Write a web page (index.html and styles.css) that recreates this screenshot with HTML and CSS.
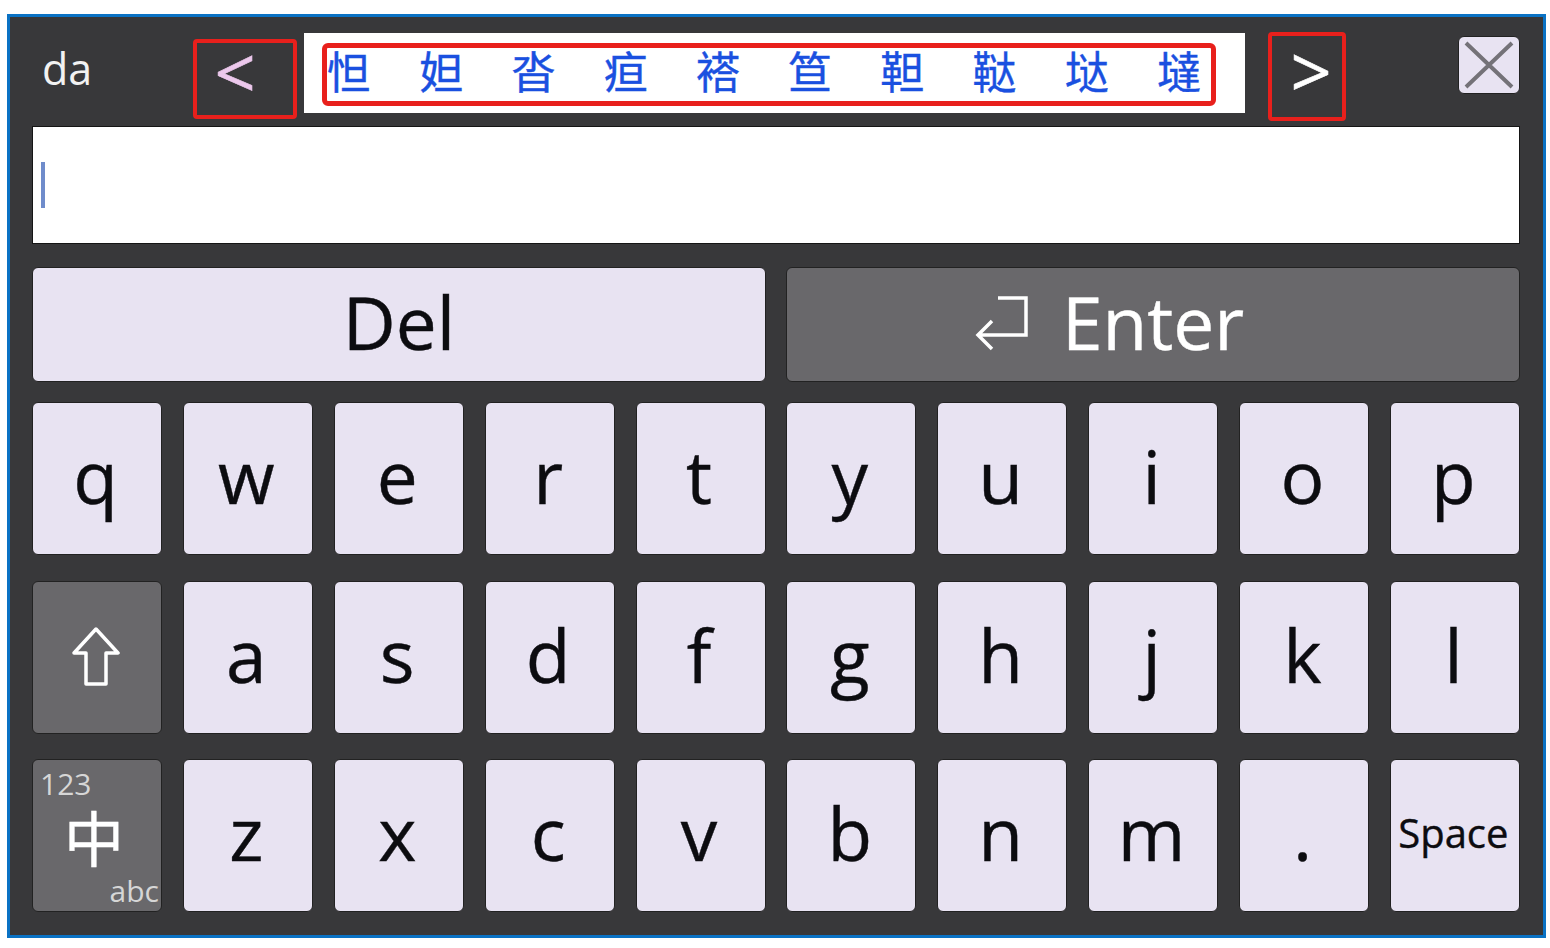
FILE: index.html
```html
<!DOCTYPE html>
<html lang="zh">
<head>
  <meta charset="UTF-8">
  <title>Keyboard</title>
  <link rel="stylesheet" href="styles.css">
</head>
<body>
  <div class="window">

    <div class="top-bar">
      <span class="pinyin">da</span>
      <div class="arrow arrow-left">&lt;</div>
      <div class="candidates">
        <div class="candidate-list">
          <span>怛</span><span>妲</span><span>沓</span><span>疸</span><span>褡</span><span>笪</span><span>靼</span><span>鞑</span><span>垯</span><span>墶</span>
        </div>
      </div>
      <div class="arrow arrow-right">&gt;</div>
      <div class="close">
        <svg width="60" height="56" viewBox="0 0 60 56"><path d="M7 6 L53 50 M53 6 L7 50" stroke="#747278" stroke-width="4" fill="none"/></svg>
      </div>
    </div>

    <div class="input-box"><span class="cursor"></span></div>

    <div class="action-row">
      <div class="key action">Del</div>
      <div class="key action dark enter">
        <svg class="enter-icon" width="56" height="60" viewBox="0 0 56 60"><path d="M24 5 H52 V42 H4 M18 28 L4 42 L18 56" stroke="#fff" stroke-width="3.5" fill="none"/></svg>
        Enter
      </div>
    </div>

    <div class="keys">
      <div class="key">q</div>
      <div class="key">w</div>
      <div class="key">e</div>
      <div class="key">r</div>
      <div class="key">t</div>
      <div class="key">y</div>
      <div class="key">u</div>
      <div class="key">i</div>
      <div class="key">o</div>
      <div class="key">p</div>

      <div class="key dark">
        <svg class="shift-icon" width="50" height="60" viewBox="0 0 50 60"><path d="M25 2 L47 26 H35 V57 H15 V26 H3 Z" stroke="#fff" stroke-width="3.5" fill="none" stroke-linejoin="round"/></svg>
      </div>
      <div class="key">a</div>
      <div class="key">s</div>
      <div class="key">d</div>
      <div class="key">f</div>
      <div class="key">g</div>
      <div class="key">h</div>
      <div class="key">j</div>
      <div class="key">k</div>
      <div class="key">l</div>

      <div class="key dark mode">
        <span class="mode-num">123</span>
        <span class="mode-zh">中</span>
        <span class="mode-abc">abc</span>
      </div>
      <div class="key">z</div>
      <div class="key">x</div>
      <div class="key">c</div>
      <div class="key">v</div>
      <div class="key">b</div>
      <div class="key">n</div>
      <div class="key">m</div>
      <div class="key">.</div>
      <div class="key space">Space</div>
    </div>

  </div>
</body>
</html>
```

FILE: styles.css
```css
* { box-sizing: border-box; margin: 0; padding: 0; }
html, body { width: 1550px; height: 948px; overflow: hidden; }
body { background: #fff; font-family: "Open Sans", "Noto Sans", sans-serif; }

.window { width: 1539px; height: 924px; margin: 14px 0 0 7px; padding: 0 23px 0 22px; background: #38383a; border: 3px solid #0a72c4; }

.top-bar { display: flex; align-items: flex-start; height: 109px; }
.pinyin { width: 161px; margin-top: 27px; padding-left: 10px; font-size: 43px; line-height: 50px; color: #f2f2f2; }
.arrow { display: flex; align-items: center; justify-content: center; border: 4px solid #e8201c; border-radius: 4px; font-size: 72px; -webkit-text-stroke: 0.6px; }
.arrow-left { width: 104px; height: 80px; margin: 22px 7px 0 0; padding: 0 20px 16px 0; color: #ecc8ec; }
.arrow-right { width: 78px; height: 89px; margin: 15px 112px 0 23px; padding: 0 0 14px 8px; color: #fff; }
.candidates { width: 941px; height: 80px; margin-top: 16px; padding: 10px 29px 0 18px; background: #fff; }
.candidate-list { display: flex; justify-content: space-between; align-items: center; height: 63px; padding: 0 10px 10px 0; border: 5px solid #e8201c; border-radius: 6px; font-family: "Noto Sans CJK SC", sans-serif; font-size: 44px; line-height: 46px; color: #1a50e0; -webkit-text-stroke: 0.4px #1a50e0; }
.close { width: 62px; height: 58px; margin-top: 19px; background: #e8e3f2; border: 1px solid #222; border-radius: 6px; overflow: hidden; }
.close svg { display: block; }

.input-box { display: flex; align-items: center; height: 118px; padding-left: 8px; background: #fff; border: 1px solid #151515; }
.cursor { width: 4px; height: 46px; background: #6f8ccb; }

.key { display: flex; align-items: center; justify-content: center; padding: 0 3px 6px 0; background: #e8e3f2; border: 1px solid #222; border-radius: 6px; font-size: 73px; line-height: 1; color: #0c0c10; -webkit-text-stroke: 0.4px; }
.key.dark { background: #69686b; color: #fff; }

.action-row { display: grid; grid-template-columns: 734px 734px; column-gap: 20px; height: 115px; margin: 23px 0 20px; }
.action { padding-right: 0; }
.key.enter { padding-right: 88px; }
.enter-icon { margin: 3px 32px 0 0; }
.shift-icon { margin-top: 6px; }

.keys { display: grid; grid-template-columns: repeat(10, 130px); grid-auto-rows: 153px; column-gap: 20.89px; row-gap: 25.5px; }
.space { padding-bottom: 5px; font-size: 40px; }

.mode { position: relative; }
.mode-num { position: absolute; top: 9px; left: 7px; font-size: 30px; line-height: 30px; color: #d6d6d6; -webkit-text-stroke: 0; }
.mode-zh { font-family: "Noto Sans CJK SC", sans-serif; font-size: 60px; line-height: 50px; margin-right: 3px; margin-top: 6px; }
.mode-abc { position: absolute; right: 2px; bottom: 5px; font-size: 30px; line-height: 30px; color: #d6d6d6; -webkit-text-stroke: 0; }
```
